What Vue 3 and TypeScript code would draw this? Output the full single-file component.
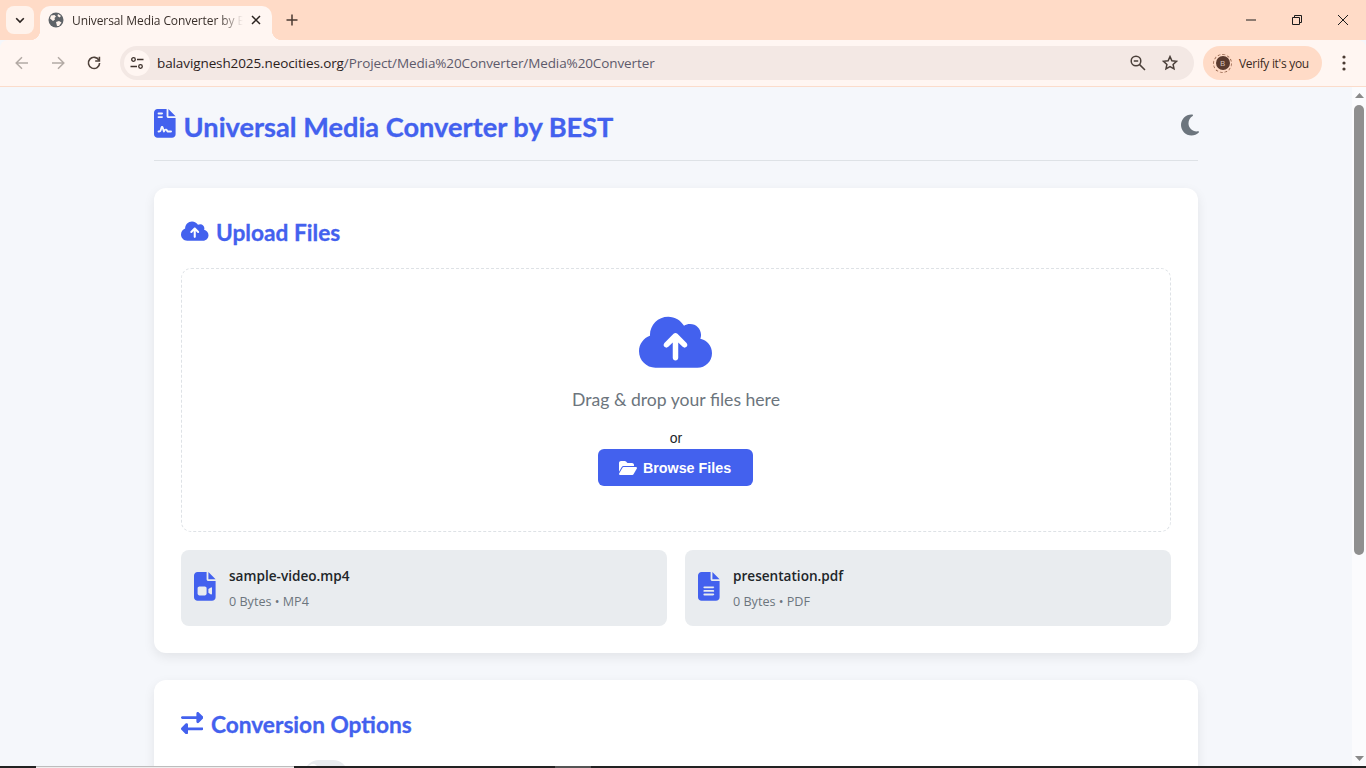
<script setup lang="ts">
const files = [
  {
    name: 'sample-video.mp4',
    meta: '0 Bytes • MP4',
    icon: 'M64 0C28.7 0 0 28.7 0 64V448c0 35.3 28.7 64 64 64H320c35.3 0 64-28.7 64-64V160H256c-17.7 0-32-14.3-32-32V0H64zM256 0V128H384L256 0zM64 288c0-17.7 14.3-32 32-32h96c17.7 0 32 14.3 32 32v96c0 17.7-14.3 32-32 32H96c-17.7 0-32-14.3-32-32V288zM300.9 397.9L256 368V304l44.9-29.9c2-1.3 4.4-2.1 6.8-2.1c6.8 0 12.3 5.5 12.3 12.3V387.7c0 6.8-5.5 12.3-12.3 12.3c-2.4 0-4.8-.7-6.8-2.1z',
  },
  {
    name: 'presentation.pdf',
    meta: '0 Bytes • PDF',
    icon: 'M64 0C28.7 0 0 28.7 0 64V448c0 35.3 28.7 64 64 64H320c35.3 0 64-28.7 64-64V160H256c-17.7 0-32-14.3-32-32V0H64zM256 0V128H384L256 0zM112 256H272c8.8 0 16 7.2 16 16s-7.2 16-16 16H112c-8.8 0-16-7.2-16-16s7.2-16 16-16zm0 64H272c8.8 0 16 7.2 16 16s-7.2 16-16 16H112c-8.8 0-16-7.2-16-16s7.2-16 16-16zm0 64H272c8.8 0 16 7.2 16 16s-7.2 16-16 16H112c-8.8 0-16-7.2-16-16s7.2-16 16-16z',
  },
]

const cloudUp =
  'M144 480C64.5 480 0 415.5 0 336c0-62.8 40.2-116.2 96.2-135.9c-.1-2.7-.2-5.4-.2-8.1c0-88.4 71.6-160 160-160c59.3 0 111 32.2 138.7 80.2C409.9 101.9 428.3 96 448 96c53 0 96 43 96 96c0 12.2-2.3 23.8-6.4 34.6C596 238.4 640 290.1 640 352c0 70.7-57.3 128-128 128H144zm79-217c-9.4 9.4-9.4 24.6 0 33.9s24.6 9.4 33.9 0l39-39V392c0 13.3 10.7 24 24 24s24-10.7 24-24V257.9l39 39c9.4 9.4 24.6 9.4 33.9 0s9.4-24.6 0-33.9l-80-80c-9.4-9.4-24.6-9.4-33.9 0l-80 80z'
</script>

<template>
  <div class="screen">
    <div class="tabstrip">
      <button class="tab-search">
        <svg width="12" height="12" viewBox="0 0 12 12"><path d="M2.2 4.2 6 8l3.8-3.8" fill="none" stroke="#2b2320" stroke-width="1.6" /></svg>
      </button>
      <div class="tab">
        <svg class="globe" width="16" height="16" viewBox="0 0 16 16">
          <circle cx="8" cy="8" r="7.5" fill="#5f6368" />
          <path d="M3 3.5 6.5 3 8 4.5 6.5 6 7 7.5 5 9 2 6.5ZM8 10l3-1 2.5 1.5L11 14 9 14ZM10 2l3 2-1.5 1.5L9.5 4Z" fill="#fff3ec" />
        </svg>
        <span class="tab-title">Universal Media Converter by BEST</span>
        <svg class="tab-close" width="10" height="10" viewBox="0 0 10 10"><path d="M1 1l8 8M9 1l-8 8" stroke="#2b2320" stroke-width="1.5" /></svg>
      </div>
      <svg class="tab-new" width="12" height="12" viewBox="0 0 12 12"><path d="M6 .5v11M.5 6h11" stroke="#4a3a32" stroke-width="1.5" /></svg>
      <div class="win-controls">
        <svg width="10" height="10" viewBox="0 0 10 10"><path d="M0 5h10" stroke="#1c1c1c" /></svg>
        <svg width="10" height="10" viewBox="0 0 10 10" fill="none" stroke="#1c1c1c"><path d="M.5 2.5h7v7h-7zM2.5 2.5V.5h7v7h-2" /></svg>
        <svg width="10" height="10" viewBox="0 0 10 10"><path d="M0 0l10 10M10 0 0 10" stroke="#1c1c1c" /></svg>
      </div>
    </div>

    <div class="toolbar">
      <svg class="nav" width="16" height="16" viewBox="0 0 16 16" fill="none" stroke="#b3aaa5" stroke-width="1.5"><path d="M14 8H2.5M8 2.2 2.2 8 8 13.8" /></svg>
      <svg class="nav" width="16" height="16" viewBox="0 0 16 16" fill="none" stroke="#b3aaa5" stroke-width="1.5"><path d="M2 8h11.5M8 2.2 13.8 8 8 13.8" /></svg>
      <svg class="nav" width="16" height="16" viewBox="0 0 16 16" fill="none" stroke="#4f423b" stroke-width="1.6"><path d="M13 5.4A5.6 5.6 0 1 0 13.6 8" /><path d="M13.4 1.8v4.2H9.2" /></svg>
      <div class="omnibox">
        <span class="site-btn">
          <svg width="14" height="14" viewBox="0 0 14 14" fill="none" stroke="#3e322c" stroke-width="1.3"><circle cx="3.5" cy="3.5" r="1.8" /><path d="M7 3.5h6.5M.5 10.5H7" /><circle cx="10.5" cy="10.5" r="1.8" /></svg>
        </span>
        <span class="url"><b>balavignesh2025.neocities.org</b>/Project/Media%20Converter/Media%20Converter</span>
        <svg class="omni-icon" width="16" height="16" viewBox="0 0 16 16" fill="none" stroke="#4a3f39" stroke-width="1.5"><circle cx="6" cy="6" r="4.8" /><path d="M9.6 9.6 15 15M3.8 6h4.4" /></svg>
        <svg class="omni-icon" width="16" height="16" viewBox="0 0 16 16" fill="none" stroke="#4a3f39" stroke-width="1.5"><path d="M8 1.6 9.9 5.8l4.6.5-3.4 3.1.9 4.5L8 11.6l-4 2.3.9-4.500L1.500 6.300l4.600-.5Z" /></svg>
      </div>
      <div class="profile">
        <span class="avatar"><span>B</span></span>
        <span>Verify it's you</span>
      </div>
      <svg class="menu-dots" width="4" height="16" viewBox="0 0 4 16" fill="#4a3a32"><circle cx="2" cy="2" r="1.6" /><circle cx="2" cy="8" r="1.6" /><circle cx="2" cy="14" r="1.6" /></svg>
    </div>

    <div class="viewport">
      <div class="page">
        <div class="container">
          <header class="app-header">
            <h1>
              <svg class="h1-icon" width="21.6" height="28.8" viewBox="0 0 384 512" fill="#4361ee">
                <path d="M64 0C28.7 0 0 28.7 0 64V448c0 35.3 28.7 64 64 64H320c35.3 0 64-28.7 64-64V160H256c-17.7 0-32-14.3-32-32V0H64zM256 0V128H384L256 0zM80 64h64c8.8 0 16 7.2 16 16s-7.2 16-16 16H80c-8.8 0-16-7.2-16-16s7.2-16 16-16zm0 64h64c8.8 0 16 7.2 16 16s-7.2 16-16 16H80c-8.8 0-16-7.2-16-16s7.2-16 16-16zm54.2 253.8c-6.1 20.3-24.8 34.2-46 34.2H80c-8.8 0-16-7.2-16-16s7.2-16 16-16h8.2c7.1 0 13.3-4.6 15.3-11.4l14.9-49.5c3.4-11.3 13.8-19.1 25.6-19.1s22.2 7.7 25.6 19.1l11.6 38.6c7.4-6.2 16.8-9.7 26.8-9.7c15.9 0 30.4 9 37.5 23.2l4.4 8.8H304c8.8 0 16 7.2 16 16s-7.2 16-16 16H240c-6.1 0-11.6-3.4-14.3-8.8l-8.8-17.7c-1.7-3.4-5.1-5.5-8.8-5.5s-7.2 2.1-8.8 5.5l-8.8 17.7c-2.9 5.9-9.2 9.4-15.7 8.8s-12.1-5.1-13.9-11.3L144 349l-9.8 32.8z" />
              </svg>
              Universal Media Converter by BEST
            </h1>
            <svg class="moon" width="18" height="24" viewBox="0 0 384 512" fill="#6c757d">
              <path d="M223.5 32C100 32 0 132.3 0 256S100 480 223.5 480c60.6 0 115.5-24.2 155.8-63.4c5-4.9 6.3-12.5 3.1-18.7s-10.1-9.7-17-8.5c-9.8 1.7-19.8 2.6-30.1 2.6c-96.9 0-175.5-78.8-175.5-176c0-65.8 36-123.1 89.3-153.3c6.1-3.5 9.2-10.5 7.7-17.3s-7.3-11.9-14.3-12.5c-6.3-.5-12.6-.8-19-.8z" />
            </svg>
          </header>

          <section class="card">
            <h2>
              <svg width="27.5" height="22" viewBox="0 0 640 512" fill="#4361ee"><path :d="cloudUp" /></svg>
              Upload Files
            </h2>
            <div class="dropzone">
              <svg class="drop-icon" width="73" height="58.4" viewBox="0 0 640 512" fill="#4361ee"><path :d="cloudUp" /></svg>
              <p class="drop-title">Drag &amp; drop your files here</p>
              <p class="drop-or">or</p>
              <button class="browse">
                <svg width="18" height="16" viewBox="0 0 576 512" fill="#fff">
                  <path d="M88.7 223.8L0 375.8V96C0 60.7 28.7 32 64 32H181.5c17 0 33.3 6.7 45.3 18.7l26.5 26.5c12 12 28.3 18.7 45.3 18.7H416c35.3 0 64 28.7 64 64v32H144c-22.8 0-43.8 12.1-55.3 31.8zm27.6 16.1C122.1 230 132.6 224 144 224H544c11.5 0 22 6.1 27.7 16.1s5.7 22.2-.1 32.1l-112 192C453.9 474 443.4 480 432 480H32c-11.5 0-22-6.1-27.7-16.1s-5.7-22.2 .1-32.1l112-192z" />
                </svg>
                Browse Files
              </button>
            </div>
            <div class="file-grid">
              <div v-for="file in files" :key="file.name" class="file-item">
                <svg class="file-icon" width="21.6" height="28.8" viewBox="0 0 384 512" fill="#4361ee"><path :d="file.icon" /></svg>
                <div class="file-text">
                  <div class="file-name">{{ file.name }}</div>
                  <div class="file-meta">{{ file.meta }}</div>
                </div>
              </div>
            </div>
          </section>

          <section class="card">
            <h2>
              <svg width="22.4" height="22.4" viewBox="0 0 512 512" fill="#4361ee">
                <path d="M32 96l320 0V32c0-12.9 7.8-24.6 19.8-29.6s25.7-2.2 34.9 6.9l96 96c6 6 9.4 14.1 9.4 22.6s-3.4 16.6-9.4 22.6l-96 96c-9.2 9.2-22.9 11.9-34.9 6.9s-19.8-16.6-19.8-29.6V160L32 160c-17.7 0-32-14.3-32-32s14.3-32 32-32zM480 352c17.7 0 32 14.3 32 32s-14.3 32-32 32H160v64c0 12.9-7.8 24.6-19.8 29.6s-25.7 2.2-34.9-6.9l-96-96c-6-6-9.4-14.1-9.4-22.6s3.4-16.6 9.4-22.6l96-96c9.2-9.2 22.9-11.9 34.9-6.9s19.8 16.6 19.8 29.6l0 64H480z" />
              </svg>
              Conversion Options
            </h2>
            <div class="option-chips">
              <span class="chip"><i></i></span>
            </div>
          </section>
        </div>
      </div>

      <div class="scrollbar">
        <svg width="9" height="5" viewBox="0 0 9 5"><path d="M4.5 0 9 5H0Z" fill="#8a8a8a" /></svg>
        <div class="track"><div class="thumb"></div></div>
        <svg width="9" height="5" viewBox="0 0 9 5"><path d="M0 0h9L4.5 5Z" fill="#8a8a8a" /></svg>
      </div>
    </div>

    <div class="taskbar">
      <span class="task-active"></span>
      <span class="task-running"></span>
    </div>
  </div>
</template>

<style scoped>
.screen {
  height: 768px;
  display: flex;
  flex-direction: column;
  overflow: hidden;
  font-family: "Open Sans", "Noto Sans", sans-serif;
  background: #f5f7fb;
}

button {
  border: 0;
  font: inherit;
}

.tabstrip {
  height: 40px;
  flex: none;
  display: flex;
  align-items: center;
  background: #ffdbc7;
}

.tab-search {
  width: 28px;
  height: 28px;
  margin-left: 6px;
  border-radius: 8px;
  background: #fff3ec;
  display: flex;
  align-items: center;
  justify-content: center;
  padding: 0;
  flex: none;
}

.tab {
  width: 232px;
  height: 34px;
  margin-left: 6px;
  align-self: flex-end;
  padding: 0 8px 6px;
  box-sizing: border-box;
  background: #fff6f2;
  border-radius: 10px 10px 0 0;
  display: flex;
  align-items: center;
  gap: 8px;
  position: relative;
}

.tab::before,
.tab::after {
  content: "";
  position: absolute;
  bottom: 0;
  width: 10px;
  height: 10px;
}

.tab::before {
  left: -10px;
  background: radial-gradient(circle at 0 0, transparent 10px, #fff6f2 10.5px);
}

.tab::after {
  right: -10px;
  background: radial-gradient(circle at 100% 0, transparent 10px, #fff6f2 10.5px);
}

.globe {
  flex: none;
}

.tab-title {
  flex: 1;
  min-width: 0;
  overflow: hidden;
  white-space: nowrap;
  font-size: 12px;
  letter-spacing: -0.1px;
  color: #3a302b;
  -webkit-mask-image: linear-gradient(to right, #000 86%, transparent);
  mask-image: linear-gradient(to right, #000 86%, transparent);
}

.tab-close {
  flex: none;
  margin-right: 3px;
}

.tab-new {
  margin-left: 14px;
}

.win-controls {
  margin-left: auto;
  display: flex;
  align-items: center;
  gap: 36px;
  padding-right: 18px;
}

.toolbar {
  height: 47px;
  box-sizing: border-box;
  flex: none;
  display: flex;
  align-items: center;
  background: #fff6f2;
  border-radius: 8px 8px 0 0;
  border-bottom: 1px solid #fbdccb;
  padding-left: 14px;
}

.nav {
  margin-right: 20px;
}

.omnibox {
  width: 1074px;
  height: 34px;
  margin-left: -2px;
  border-radius: 17px;
  background: #f3e8e4;
  display: flex;
  align-items: center;
  padding: 0 16px 0 4px;
  box-sizing: border-box;
}

.site-btn {
  width: 26px;
  height: 26px;
  border-radius: 50%;
  background: #fff6f2;
  display: flex;
  align-items: center;
  justify-content: center;
  flex: none;
}

.url {
  flex: 1;
  margin-left: 7px;
  font-size: 13.5px;
  letter-spacing: -0.1px;
  color: #5d5a6b;
  white-space: nowrap;
}

.url b {
  font-weight: 400;
  color: #2b211c;
}

.omni-icon {
  margin-left: 16px;
}

.profile {
  margin-left: 9px;
  width: 119px;
  height: 34px;
  border-radius: 17px;
  background: #ffdbc7;
  display: flex;
  align-items: center;
  gap: 7px;
  padding-left: 10px;
  box-sizing: border-box;
  font-size: 12px;
  letter-spacing: -0.3px;
  color: #3a2a22;
}

.avatar {
  width: 19px;
  height: 19px;
  border-radius: 50%;
  border: 1px dashed #9a6a52;
  display: flex;
  align-items: center;
  justify-content: center;
  box-sizing: border-box;
}

.avatar span {
  width: 14px;
  height: 14px;
  border-radius: 50%;
  background: #5a3a2e;
  color: #d9c5bb;
  font-size: 8px;
  line-height: 14px;
  text-align: center;
}

.menu-dots {
  margin-left: 20px;
}

.viewport {
  flex: 1;
  min-height: 0;
  display: flex;
}

.page {
  flex: 1;
  min-width: 0;
  overflow: hidden;
}

.container {
  width: 1044px;
  margin: 0 auto;
}

.app-header {
  height: 74px;
  box-sizing: border-box;
  border-bottom: 1px solid #dee2e6;
  display: flex;
  align-items: center;
  justify-content: space-between;
  margin-bottom: 27px;
}

h1 {
  margin: 6px 0 0;
  display: flex;
  align-items: center;
  gap: 8px;
  font-family: Lato, "Open Sans", sans-serif;
  font-size: 27.2px;
  font-weight: 700;
  -webkit-text-stroke: 0.3px #4361ee;
  color: #4361ee;
  line-height: 36px;
}

.h1-icon {
  margin-bottom: 6px;
}

.moon {
  margin: 2px -1px 0 0;
}

.card {
  background: #fff;
  border-radius: 12px;
  padding: 27px;
  margin-bottom: 27px;
  box-shadow: 0 4px 12px rgba(0, 0, 0, 0.08);
}

h2 {
  margin: 0 0 17px;
  display: flex;
  align-items: center;
  gap: 7.5px;
  font-family: Lato, "Open Sans", sans-serif;
  font-size: 22.7px;
  font-weight: 700;
  -webkit-text-stroke: 0.3px #4361ee;
  color: #4361ee;
  line-height: 36px;
}

h2 svg {
  margin-bottom: 4px;
}

.dropzone {
  height: 264px;
  box-sizing: border-box;
  border: 1px dashed #dee2e6;
  border-radius: 10px;
  display: flex;
  flex-direction: column;
  align-items: center;
  padding-top: 44px;
}

.drop-icon {
  flex: none;
  margin-right: 1px;
}

.drop-title {
  margin: 17px 0 0;
  font-family: Lato, "Open Sans", sans-serif;
  font-size: 17.6px;
  line-height: 24px;
  color: #6c757d;
}

.drop-or {
  margin: 17px 0 0;
  font-family: "Liberation Sans", Arial, sans-serif;
  font-size: 14px;
  line-height: 18px;
  color: #212529;
}

.browse {
  margin: 2px 1px 0 0;
  width: 155px;
  height: 37px;
  border-radius: 6px;
  background: #4361ee;
  color: #fff;
  display: flex;
  align-items: center;
  justify-content: center;
  gap: 6px;
  font-family: "Liberation Sans", Arial, sans-serif;
  font-size: 14.3px;
  font-weight: 700;
  padding: 0 1px 0 0;
}

.file-grid {
  display: grid;
  grid-template-columns: 1fr 1fr;
  gap: 18px;
  margin-top: 18px;
}

.file-item {
  height: 76px;
  box-sizing: border-box;
  background: #e9ecef;
  border-radius: 8px;
  display: flex;
  align-items: center;
  gap: 13.4px;
  padding: 0 13px;
}

.file-icon {
  margin-top: -3px;
}

.file-name {
  font-size: 13.6px;
  font-weight: 600;
  line-height: 18px;
  color: #212529;
}

.file-meta {
  margin-top: 9px;
  font-size: 12.6px;
  line-height: 16px;
  color: #6c757d;
}

.option-chips {
  display: flex;
  padding-left: 123px;
}

.chip {
  width: 44px;
  height: 30px;
  border-radius: 15px;
  background: #e9ecef;
  display: flex;
  padding: 4px 0 0 4px;
  box-sizing: border-box;
}

.chip i {
  width: 10px;
  height: 10px;
  border-radius: 50%;
  background: #fff;
}

.scrollbar {
  width: 14px;
  flex: none;
  background: #fbfbfd;
  display: flex;
  flex-direction: column;
  align-items: center;
  padding: 6px 0 5px;
  box-sizing: border-box;
}

.track {
  flex: 1;
  width: 100%;
  padding-top: 7px;
  box-sizing: border-box;
}

.thumb {
  width: 10px;
  height: 450px;
  margin: 0 auto;
  border-radius: 5px;
  background: #8f8f8f;
}

.taskbar {
  height: 2px;
  flex: none;
  background: #222;
  display: flex;
}

.task-active {
  width: 258px;
  margin-left: 36px;
  box-sizing: border-box;
  border-top: 1px solid #bdbdbd;
  background: #eee;
}

.task-running {
  width: 36px;
  margin-left: 261px;
  background: #555;
}
</style>

<style>
html,
body {
  margin: 0;
  overflow: hidden;
}
</style>
